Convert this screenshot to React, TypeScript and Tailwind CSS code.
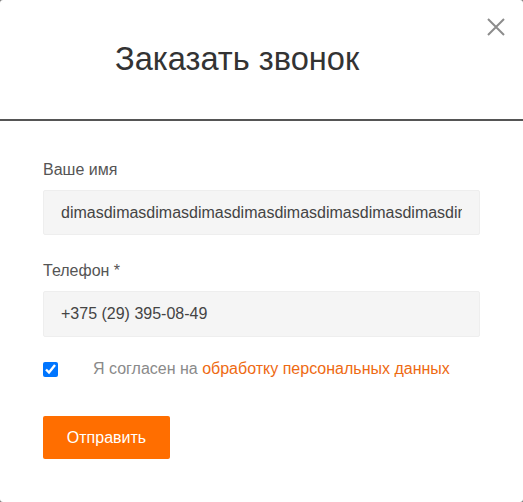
import React, { useState } from 'react';

const App: React.FC = () => {
  const [name, setName] = useState('dimasdimasdimasdimasdimasdimasdimasdimasdimasdimas');
  const [phone, setPhone] = useState('+375 (29) 395-08-49');
  const [agree, setAgree] = useState(true);

  return (
    <div className="w-[523px] h-[502px] bg-[#7a7a7a] font-['Liberation_Sans',Arial,sans-serif]">
      <div className="relative w-full h-full bg-white rounded-[3px] overflow-hidden">
        <button className="absolute right-[18px] top-[18px] w-[18px] h-[18px] text-[#8c8c8c]">
          <svg viewBox="0 0 18 18" width="18" height="18" stroke="currentColor" strokeWidth="2" fill="none">
            <path d="M1 1L17 17M17 1L1 17" />
          </svg>
        </button>

        <div className="h-[121px] pl-[115px] pt-[37px] border-b-2 border-[#555]">
          <h2 className="text-[32.6px] leading-[44px] text-[#333]">Заказать звонок</h2>
        </div>

        <form className="px-[43px] pt-[39px]" onSubmit={e => e.preventDefault()}>
          <label className="block text-[16px] leading-[20px] text-[#555]">Ваше имя</label>
          <input
            value={name}
            onChange={e => setName(e.target.value)}
            className="mt-[10px] block w-[437px] h-[45px] px-[17px] bg-[#f5f5f5] border border-[#eeeeee] rounded-[2px] text-[16px] text-[#444] outline-none"
          />

          <label className="block mt-[26px] text-[16px] leading-[20px] text-[#555]">Телефон *</label>
          <input
            value={phone}
            onChange={e => setPhone(e.target.value)}
            className="mt-[10px] block w-[437px] h-[46px] px-[17px] bg-[#f5f5f5] border border-[#eeeeee] rounded-[2px] text-[16px] text-[#444] outline-none"
          />

          <div className="mt-[22px] flex items-center h-[20px]">
            <input
              type="checkbox"
              checked={agree}
              onChange={e => setAgree(e.target.checked)}
              className="w-[15px] h-[15px] m-0 accent-[#0075ff]"
            />
            <span className="ml-[35px] text-[16px] text-[#8a8a8a]">
              Я согласен на <a href="#" className="text-[#ee6a12]">обработку персональных данных</a>
            </span>
          </div>

          <button
            type="submit"
            className="mt-[37px] w-[127px] h-[43px] bg-[#ff6e00] text-white text-[16px] rounded-[2px]"
          >
            Отправить
          </button>
        </form>
      </div>
    </div>
  );
};

export default App;
